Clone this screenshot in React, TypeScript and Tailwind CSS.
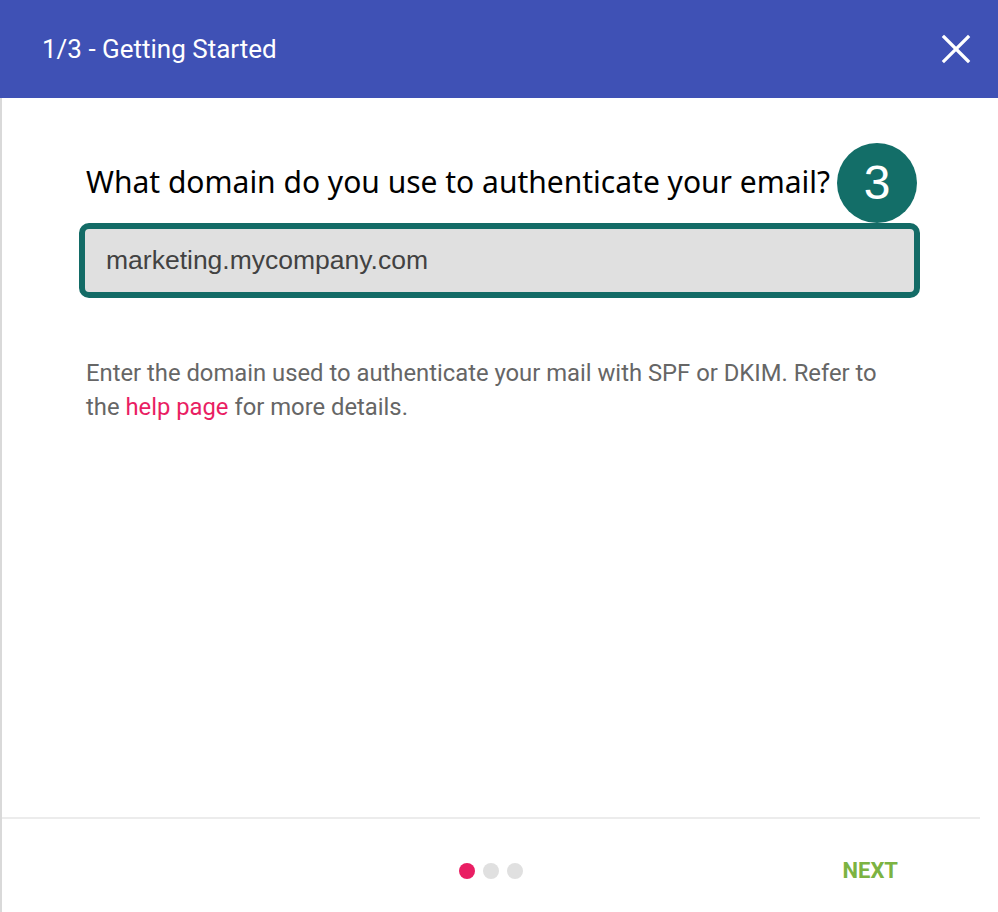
export default function App() {
  return (
    <div className="w-[998px] h-[912px] bg-white flex flex-col overflow-hidden">
      {/* Header */}
      <div className="h-[98px] bg-[#3f51b5] flex items-center justify-between pl-[42px] pr-[27px] shrink-0">
        <span className="text-white text-[26px] font-['Roboto',sans-serif]">1/3 - Getting Started</span>
        <svg width="30" height="30" viewBox="0 0 30 30" className="text-white">
          <path d="M3 3 L27 27 M27 3 L3 27" stroke="currentColor" strokeWidth="3.2" strokeLinecap="square" />
        </svg>
      </div>

      {/* Body */}
      <div className="flex-1 flex flex-col border-l-2 border-[#d9d9d9]">
        <div className="flex-1 pl-[77px] pr-[76px] pt-[64px]">
          <div className="relative pl-[7px]">
            <h2 className="text-[30px] leading-[40px] text-black font-['Noto_Sans',sans-serif]">
              What domain do you use to authenticate your email?
            </h2>
            <span className="absolute left-[758px] top-[-19px] w-[80px] h-[80px] rounded-full bg-[#136e68] text-white flex items-center justify-center text-[48px] font-['Liberation_Sans',sans-serif]">
              3
            </span>
          </div>
          <div className="mt-[21px] h-[75px] w-[841px] border-[6px] border-[#136b66] rounded-[10px] bg-[#e0e0e0] flex items-center pl-[21px]">
            <span className="text-[26.5px] text-[#424242] font-['Liberation_Sans',sans-serif]">marketing.mycompany.com</span>
          </div>
          <p className="mt-[58px] pl-[7px] w-[812px] text-[23.8px] leading-[34px] text-[#666666] font-['Roboto',sans-serif]">
            Enter the domain used to authenticate your mail with SPF or DKIM. Refer to the{" "}
            <a className="text-[#e91e63]">help page</a> for more details.
          </p>
        </div>

        {/* Footer */}
        <div className="mr-[18px] border-t-2 border-[#ececec] h-[95px] pt-[10px] relative flex items-center justify-center">
          <div className="flex items-center gap-[8px]">
            <span className="w-[16px] h-[16px] rounded-full bg-[#e91e63]" />
            <span className="w-[16px] h-[16px] rounded-full bg-[#e0e0e0]" />
            <span className="w-[16px] h-[16px] rounded-full bg-[#e0e0e0]" />
          </div>
          <button className="absolute right-[82px] text-[22px] font-bold text-[#7cb342] font-['Roboto',sans-serif]">
            NEXT
          </button>
        </div>
      </div>
    </div>
  );
}
